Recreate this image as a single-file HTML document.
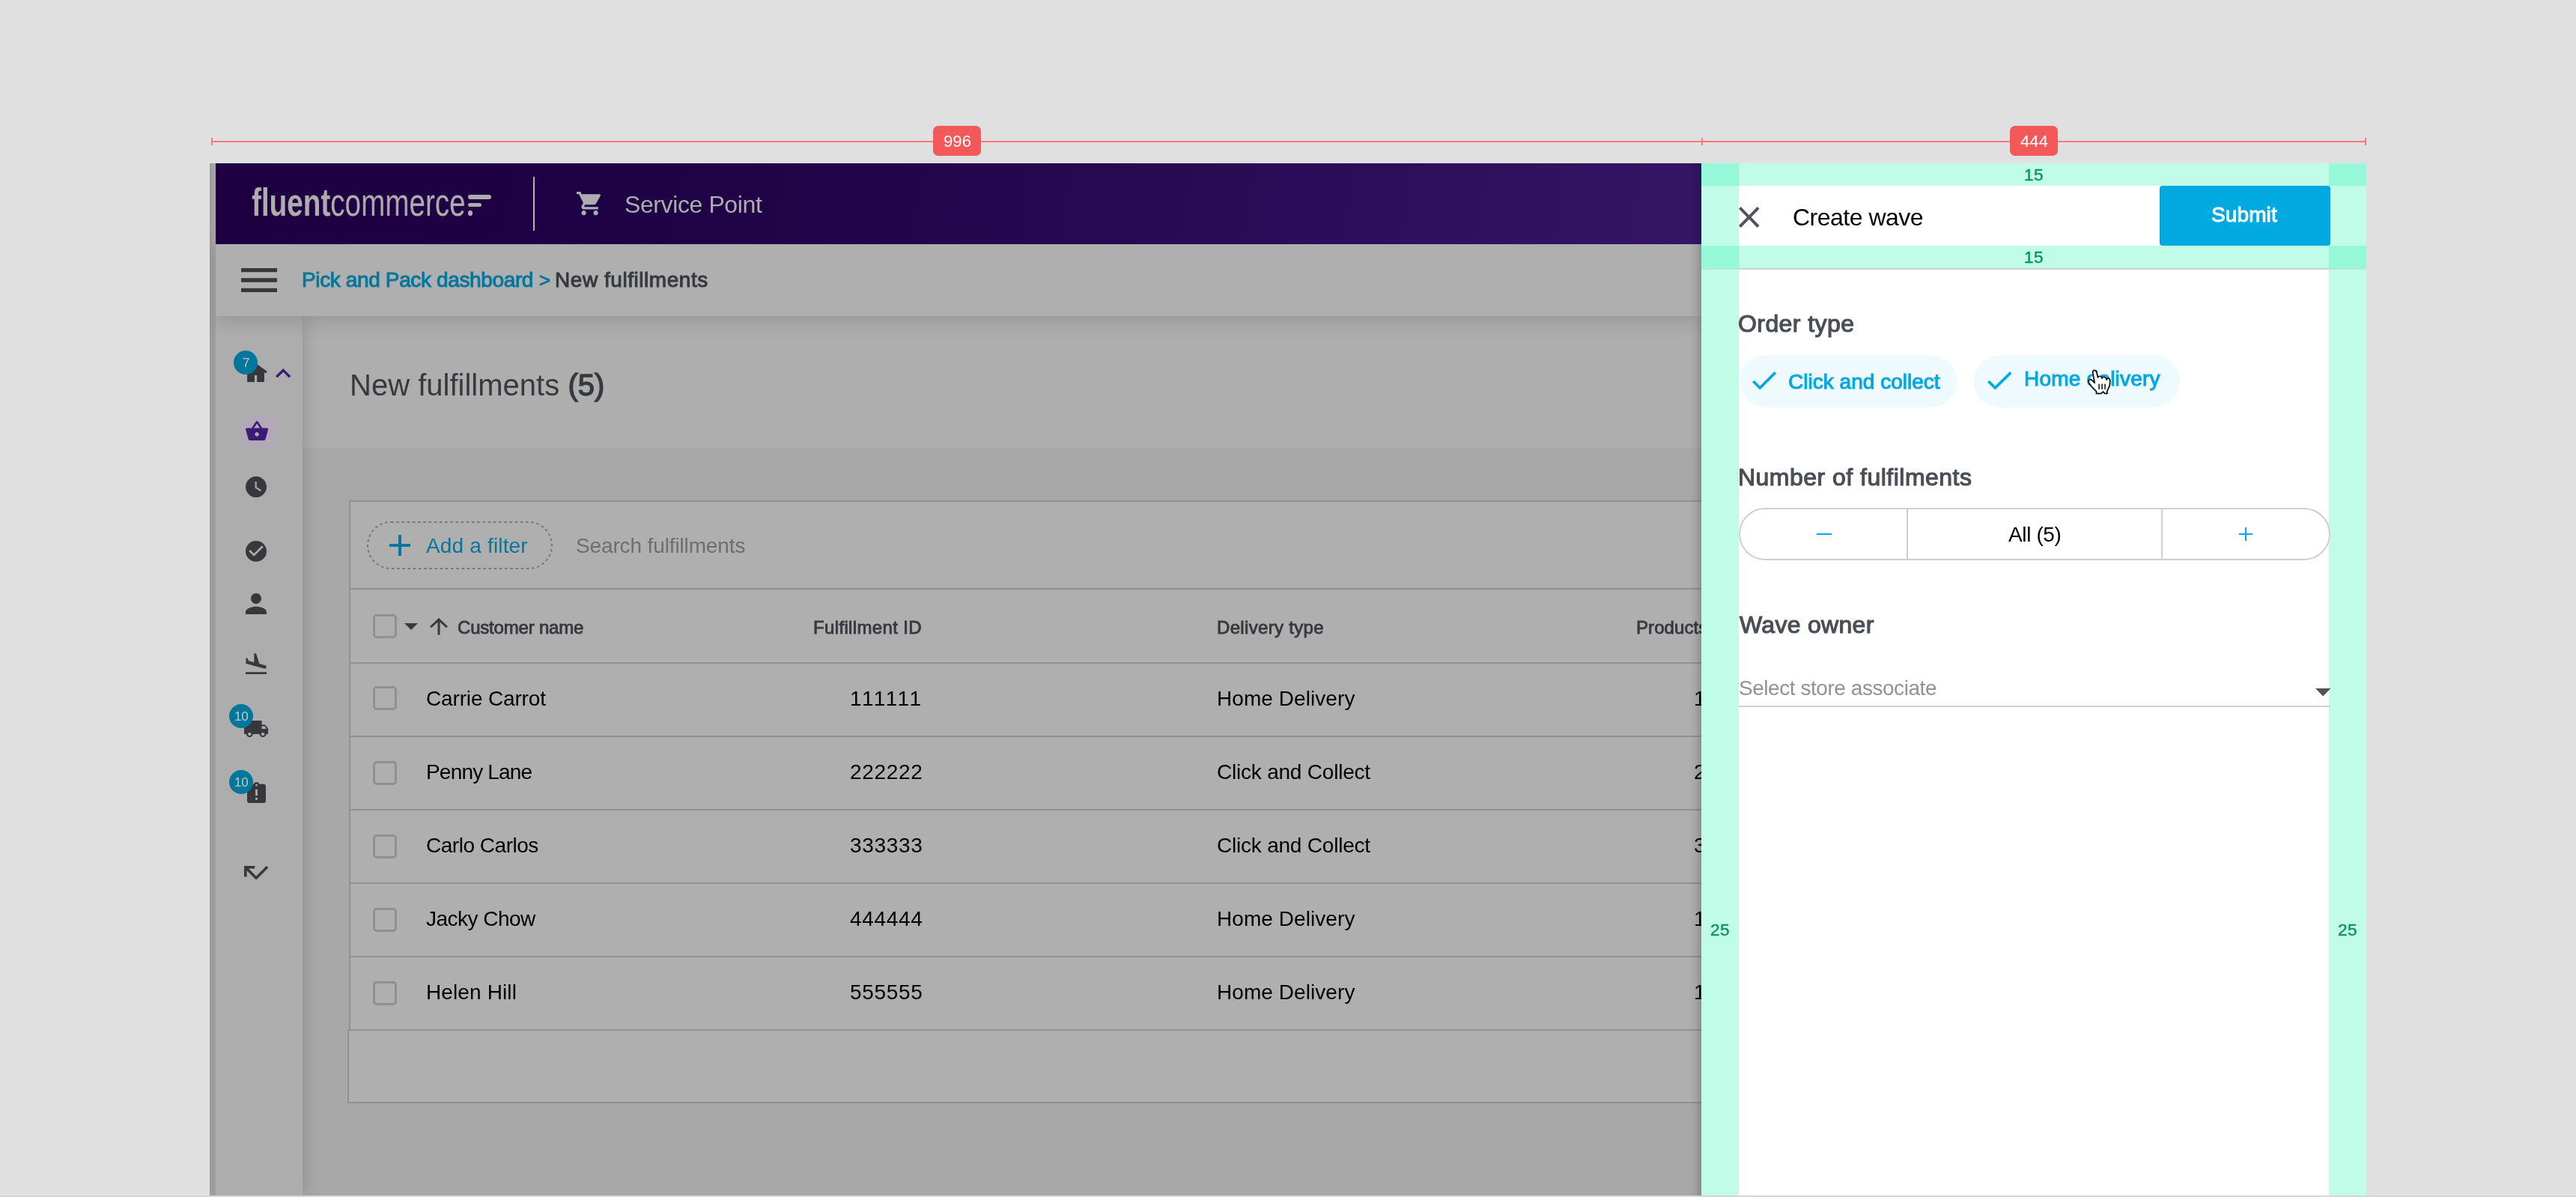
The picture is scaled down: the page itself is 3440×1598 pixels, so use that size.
<!DOCTYPE html>
<html lang="en"><head><meta charset="utf-8"><title>Create wave</title><style>
html,body{margin:0;padding:0}
body{width:3440px;height:1598px;overflow:hidden;background:#e0e0e0;position:relative;font-family:"Liberation Sans",sans-serif;}
.a{position:absolute;display:block}
.t{white-space:nowrap;line-height:1;will-change:transform}
</style></head><body>
<div class="a" style="left:0px;top:1596px;width:3440px;height:2px;background:#d4d6d9"></div>
<main class="a" style="left:0;top:0;width:2272px;height:1596px;overflow:hidden;clip-path:inset(218px 0 0 280px)">
<div class="a" style="left:280px;top:218px;width:8px;height:1378px;background:linear-gradient(90deg,#9d9d9d,#a7a7a7)"></div>
<div class="a" style="left:404px;top:422px;width:1868px;height:1174px;background:#a8a8a8"></div>
<div class="a" style="left:404px;top:422px;width:1868px;height:176px;background:#aeaeae"></div>
<div id="t1" class="a t" style="left:466.8px;top:494.44px;font-size:40px;font-weight:400;color:#36393e;letter-spacing:0.010px;">New fulfillments <span style="-webkit-text-stroke:1.400px #36393e">(5)</span></div>
<section aria-label="New fulfillments table">
<div class="a" style="left:466px;top:668px;width:2034px;height:708px;background:#afafaf;border:2px solid #8f9193;box-sizing:border-box"></div>
<div class="a" style="left:468px;top:785px;width:2032px;height:2px;background:#8f9193"></div>
<div class="a" style="left:468px;top:884px;width:2032px;height:2px;background:#8f9193"></div>
<div class="a" style="left:468px;top:982px;width:2032px;height:2px;background:#8f9193"></div>
<div class="a" style="left:468px;top:1080px;width:2032px;height:2px;background:#8f9193"></div>
<div class="a" style="left:468px;top:1178px;width:2032px;height:2px;background:#8f9193"></div>
<div class="a" style="left:468px;top:1276px;width:2032px;height:2px;background:#8f9193"></div>
<div class="a" style="left:464px;top:1374px;width:2036px;height:99px;background:#afafaf;border:2px solid #8f9193;box-sizing:border-box"></div>
<svg class="a" style="left:488px;top:694px;width:252px;height:68px" viewBox="488 694 252 68"><rect x="491" y="697" width="246" height="62" rx="31" fill="none" stroke="#77797c" stroke-width="2" stroke-dasharray="3.600 3.600"/></svg>
<div class="a" style="left:519.5px;top:726px;width:28.5px;height:4px;background:#05779c"></div>
<div class="a" style="left:531.75px;top:714px;width:4px;height:28px;background:#05779c"></div>
<div id="t2" class="a t" style="left:568.7px;top:714.90px;font-size:28px;font-weight:400;color:#05779c;letter-spacing:0.165px;">Add a filter</div>
<div id="t3" class="a t" style="left:768.5px;top:714.90px;font-size:28px;font-weight:400;color:#6c6e70;letter-spacing:-0.131px;">Search fulfillments</div>
<div class="a" style="left:498.3px;top:820.2px;width:31.4px;height:31.5px;border:3.800px solid #8e9093;border-radius:5px;box-sizing:border-box"></div>
<svg class="a" viewBox="7 10 10 5" preserveAspectRatio="none" style="left:540px;top:832px;width:18px;height:9px;"><path fill="#36393e" d="M7 10l5 5 5-5z"/></svg>
<svg class="a" viewBox="4 4 16 16" preserveAspectRatio="none" style="left:574px;top:825px;width:24px;height:22.5px;"><path fill="#36393e" d="M4 12l1.410 1.410L11 7.830V20h2V7.830l5.580 5.590L20 12l-8-8-8 8z"/></svg>
<div id="t4" class="a t" style="left:610.5px;top:826.08px;font-size:24px;font-weight:400;color:#36393e;letter-spacing:-0.192px;-webkit-text-stroke:0.86px #36393e;">Customer name</div>
<div id="t5" class="a t" style="left:1085.51px;top:826.08px;font-size:24px;font-weight:400;color:#36393e;letter-spacing:0.354px;-webkit-text-stroke:0.86px #36393e;">Fulfillment ID</div>
<div id="t6" class="a t" style="left:1624.8px;top:826.08px;font-size:24px;font-weight:400;color:#36393e;letter-spacing:0.325px;-webkit-text-stroke:0.86px #36393e;">Delivery type</div>
<div id="t7" class="a t" style="left:2184.7px;top:826.08px;font-size:24px;font-weight:400;color:#36393e;letter-spacing:0.067px;-webkit-text-stroke:0.86px #36393e;">Products</div>
<div class="a" style="left:498.3px;top:916.1px;width:31.4px;height:31.5px;border:3.800px solid #8e9093;border-radius:5px;box-sizing:border-box"></div>
<div id="t8" class="a t" style="left:568.7px;top:918.60px;font-size:28px;font-weight:400;color:#000;letter-spacing:-0.157px;">Carrie Carrot</div>
<div id="t9" class="a t" style="left:1134.56px;top:918.60px;font-size:28px;font-weight:400;color:#000;letter-spacing:2.399px;">111111</div>
<div id="t10" class="a t" style="left:1624.8px;top:918.60px;font-size:28px;font-weight:400;color:#000;letter-spacing:0.067px;">Home Delivery</div>
<div id="t11" class="a t" style="left:2261.76px;top:918.60px;font-size:28px;font-weight:400;color:#000;letter-spacing:0.663px;">1</div>
<div class="a" style="left:498.3px;top:1016px;width:31.4px;height:31.5px;border:3.800px solid #8e9093;border-radius:5px;box-sizing:border-box"></div>
<div id="t12" class="a t" style="left:568.7px;top:1016.60px;font-size:28px;font-weight:400;color:#000;letter-spacing:-0.810px;">Penny Lane</div>
<div id="t13" class="a t" style="left:1134.56px;top:1016.60px;font-size:28px;font-weight:400;color:#000;letter-spacing:0.668px;">222222</div>
<div id="t14" class="a t" style="left:1624.8px;top:1016.60px;font-size:28px;font-weight:400;color:#000;letter-spacing:-0.214px;">Click and Collect</div>
<div id="t15" class="a t" style="left:2261.76px;top:1016.60px;font-size:28px;font-weight:400;color:#000;letter-spacing:0.663px;">2</div>
<div class="a" style="left:498.3px;top:1114.2px;width:31.4px;height:31.5px;border:3.800px solid #8e9093;border-radius:5px;box-sizing:border-box"></div>
<div id="t16" class="a t" style="left:568.7px;top:1114.60px;font-size:28px;font-weight:400;color:#000;letter-spacing:-0.477px;">Carlo Carlos</div>
<div id="t17" class="a t" style="left:1134.56px;top:1114.60px;font-size:28px;font-weight:400;color:#000;letter-spacing:0.668px;">333333</div>
<div id="t18" class="a t" style="left:1624.8px;top:1114.60px;font-size:28px;font-weight:400;color:#000;letter-spacing:-0.214px;">Click and Collect</div>
<div id="t19" class="a t" style="left:2261.76px;top:1114.60px;font-size:28px;font-weight:400;color:#000;letter-spacing:0.663px;">3</div>
<div class="a" style="left:498.3px;top:1212.2px;width:31.4px;height:31.5px;border:3.800px solid #8e9093;border-radius:5px;box-sizing:border-box"></div>
<div id="t20" class="a t" style="left:568.7px;top:1212.60px;font-size:28px;font-weight:400;color:#000;letter-spacing:-0.525px;">Jacky Chow</div>
<div id="t21" class="a t" style="left:1134.56px;top:1212.60px;font-size:28px;font-weight:400;color:#000;letter-spacing:0.668px;">444444</div>
<div id="t22" class="a t" style="left:1624.8px;top:1212.60px;font-size:28px;font-weight:400;color:#000;letter-spacing:0.067px;">Home Delivery</div>
<div id="t23" class="a t" style="left:2261.76px;top:1212.60px;font-size:28px;font-weight:400;color:#000;letter-spacing:0.663px;">1</div>
<div class="a" style="left:498.3px;top:1310.1px;width:31.4px;height:31.5px;border:3.800px solid #8e9093;border-radius:5px;box-sizing:border-box"></div>
<div id="t24" class="a t" style="left:568.7px;top:1310.60px;font-size:28px;font-weight:400;color:#000;letter-spacing:0.119px;">Helen Hill</div>
<div id="t25" class="a t" style="left:1134.56px;top:1310.60px;font-size:28px;font-weight:400;color:#000;letter-spacing:0.668px;">555555</div>
<div id="t26" class="a t" style="left:1624.8px;top:1310.60px;font-size:28px;font-weight:400;color:#000;letter-spacing:0.067px;">Home Delivery</div>
<div id="t27" class="a t" style="left:2261.76px;top:1310.60px;font-size:28px;font-weight:400;color:#000;letter-spacing:0.663px;">1</div>
</section>
<nav aria-label="Sidebar">
<div class="a" style="left:288px;top:422px;width:116px;height:1174px;background:#adadad;box-shadow:3px 0 22px rgba(0,0,0,.14)"></div>
<svg class="a" style="left:320px;top:480px;width:40px;height:32px" viewBox="320 480 40 32"><path fill="#36383c" d="M330.100 510V496.900L328 498.400 326.200 495.900 341.500 484.800 356.800 495.900 355 498.400 352.900 496.900V510H343.200V501H340V510z"/></svg>
<div class="a" style="left:312px;top:468px;width:32px;height:32px;background:#02779c;border-radius:50%"></div>
<div id="t28" class="a t" style="left:324.05px;top:475.61px;font-size:17px;font-weight:400;color:#c4c8ca;letter-spacing:0.031px;">7</div>
<svg class="a" viewBox="6 8 12 7.41" preserveAspectRatio="none" style="left:367.8px;top:492px;width:20.4px;height:12.4px;"><path fill="#3b1a78" d="M12 8l-6 6 1.410 1.410L12 10.830l4.590 4.580L18 14z"/></svg>
<div class="a" style="left:318px;top:550px;width:52px;height:52px;background:#b1a9b6;border-radius:50%"></div>
<svg class="a" viewBox="1 2.02 22 18.98" preserveAspectRatio="none" style="left:328px;top:562px;width:30.2px;height:26px;"><path fill="#3b1a78" d="M17.21 9l-4.38-6.56c-.19-.28-.51-.42-.83-.42-.32 0-.64.14-.83.43L6.79 9H2c-.55 0-1 .45-1 1 0 .09.01.18.04.27l2.54 9.27c.23.84 1 1.46 1.92 1.46h13c.92 0 1.69-.62 1.93-1.46l2.54-9.27L23 10c0-.55-.45-1-1-1h-4.79zM9 9l3-4.4L15 9H9zm3 8c-1.1 0-2-.9-2-2s.9-2 2-2 2 .9 2 2-.9 2-2 2z"/></svg>
<svg class="a" viewBox="2 2 20 20" preserveAspectRatio="none" style="left:328px;top:635.8px;width:28px;height:28.1px;"><path fill="#36383c" d="M12 2C6.5 2 2 6.5 2 12s4.5 10 10 10 10-4.5 10-10S17.5 2 12 2zm4.2 14.2L11 13V7h1.5v5.2l4.5 2.700-.8 1.300z"/></svg>
<svg class="a" viewBox="2 2 20 20" preserveAspectRatio="none" style="left:328px;top:722px;width:28px;height:27.8px;"><path fill="#36383c" d="M12 2C6.48 2 2 6.48 2 12s4.48 10 10 10 10-4.48 10-10S17.52 2 12 2zm-2 15l-5-5 1.41-1.41L10 14.17l7.59-7.59L19 8l-9 9z"/></svg>
<svg class="a" viewBox="4 4 16 16" preserveAspectRatio="none" style="left:328px;top:791.7px;width:28px;height:28.3px;"><path fill="#36383c" d="M12 12c2.21 0 4-1.79 4-4s-1.79-4-4-4-4 1.79-4 4 1.79 4 4 4zm0 2c-2.67 0-8 1.34-8 4v2h16v-2c0-2.660-5.330-4-8-4z"/></svg>
<svg class="a" viewBox="2.5 2 19 19" preserveAspectRatio="none" style="left:328px;top:871.9px;width:28.2px;height:28.1px;"><path fill="#36383c" d="M2.5 19h19v2h-19zm7.18-5.730l4.350 1.160 5.310 1.420c.8.210 1.620-.260 1.840-1.060.210-.8-.260-1.620-1.060-1.840l-5.310-1.420-2.760-9.020L10.120 2v8.280L5.150 8.950l-.930-2.320-1.450-.390v5.170l1.600.430 5.310 1.430z"/></svg>
<svg class="a" viewBox="1 4 22 16" preserveAspectRatio="none" style="left:325.8px;top:961.9px;width:32.4px;height:22.1px;"><path fill="#36383c" d="M20 8h-3V4H3c-1.100 0-2 .9-2 2v11h2c0 1.660 1.340 3 3 3s3-1.340 3-3h6c0 1.660 1.340 3 3 3s3-1.340 3-3h2v-5l-3-4zM6 18.500c-.830 0-1.500-.670-1.500-1.500s.670-1.500 1.500-1.500 1.500.670 1.500 1.500-.670 1.500-1.500 1.500zm13.500-9l1.960 2.500H17V9.500h2.500zm-1.500 9c-.830 0-1.500-.670-1.500-1.500s.670-1.500 1.500-1.500 1.500.670 1.500 1.500-.670 1.500-1.500 1.500z"/></svg>
<div class="a" style="left:306px;top:940px;width:32px;height:32px;background:#02779c;border-radius:50%"></div>
<div id="t29" class="a t" style="left:312.75px;top:947.61px;font-size:17px;font-weight:400;color:#c4c8ca;letter-spacing:-0.211px;">10</div>
<svg class="a" viewBox="3 1 18 20" preserveAspectRatio="none" style="left:330px;top:1044px;width:25px;height:28px;"><path fill="#36383c" d="M19 3h-4.180C14.400 1.840 13.300 1 12 1c-1.300 0-2.400.840-2.820 2H5c-1.100 0-2 .9-2 2v14c0 1.100.9 2 2 2h14c1.100 0 2-.9 2-2V5c0-1.100-.9-2-2-2zm-6 15h-2v-2h2v2zm0-4h-2V8h2v6zm-1-9c-.550 0-1-.450-1-1s.450-1 1-1 1 .450 1 1-.450 1-1 1z"/></svg>
<div class="a" style="left:306px;top:1028px;width:32px;height:32px;background:#02779c;border-radius:50%"></div>
<div id="t30" class="a t" style="left:312.75px;top:1035.61px;font-size:17px;font-weight:400;color:#c4c8ca;letter-spacing:-0.211px;">10</div>
<svg class="a" viewBox="3 7 18 10.41" preserveAspectRatio="none" style="left:325.8px;top:1155.6px;width:32.2px;height:18.8px;"><path fill="#36383c" d="M19.59 7L12 14.590 6.410 9H11V7H3v8h2v-4.590l7 7 9-9z"/></svg>
</nav>
<nav aria-label="Breadcrumb">
<div class="a" style="left:288px;top:326px;width:1984px;height:96px;background:#afafaf;box-shadow:0 4px 26px rgba(0,0,0,.17)"></div>
<svg class="a" viewBox="3 6 18 12" preserveAspectRatio="none" style="left:322px;top:358px;width:48px;height:32px;"><path fill="#36383c" d="M3 18h18v-2H3v2zm0-5h18v-2H3v2zm0-7v2h18V6H3z"/></svg>
<div id="t31" class="a t" style="left:403px;top:359.80px;font-size:28px;font-weight:400;color:#05779c;letter-spacing:-0.368px;-webkit-text-stroke:1.01px #05779c;">Pick and Pack dashboard</div>
<div id="t32" class="a t" style="left:720px;top:361.49px;font-size:26px;font-weight:400;color:#05779c;letter-spacing:-2.188px;-webkit-text-stroke:0.94px #05779c;">></div>
<div id="t33" class="a t" style="left:741px;top:359.80px;font-size:28px;font-weight:400;color:#36393e;letter-spacing:0.548px;-webkit-text-stroke:1.01px #36393e;">New fulfillments</div>
</nav>
<header>
<div class="a" style="left:288px;top:218px;width:1984px;height:108px;background:linear-gradient(100deg,#1e0042 0%,#1f0145 30%,#2b0d59 75%,#341665 100%)"></div>
<div class="a t" style="left:336px;top:243.7px;font-size:52px;color:#adadad;transform-origin:0 0;transform:scaleX(.7435);letter-spacing:0"><b>fluent</b>commerce</div>
<div class="a" style="left:624.7px;top:260px;width:31.3px;height:5.7px;background:#adadad;border-radius:3px"></div>
<div class="a" style="left:624.7px;top:271px;width:18.8px;height:5.4px;background:#adadad;border-radius:3px"></div>
<div class="a" style="left:624.7px;top:280.7px;width:6.8px;height:7px;background:#adadad;border-radius:50%"></div>
<div class="a" style="left:711.8px;top:236px;width:2.1px;height:72px;background:#b2b2b2"></div>
<svg class="a" viewBox="1 2 20 20" preserveAspectRatio="none" style="left:770px;top:256.4px;width:32px;height:31.3px;"><path fill="#adadad" d="M7 18c-1.100 0-1.990.9-1.990 2S5.900 22 7 22s2-.9 2-2-.9-2-2-2zM1 2v2h2l3.600 7.590-1.350 2.450c-.160.280-.250.610-.250.960 0 1.100.9 2 2 2h12v-2H7.420c-.140 0-.250-.110-.250-.250l.030-.120.900-1.630h7.450c.750 0 1.410-.410 1.750-1.030l3.580-6.490c.080-.140.120-.310.120-.480 0-.550-.450-1-1-1H5.210l-.940-2H1zm16 16c-1.100 0-1.990.9-1.990 2s.890 2 1.990 2 2-.9 2-2-.9-2-2-2z"/></svg>
<div id="t34" class="a t" style="left:834.4px;top:256.91px;font-size:32px;font-weight:400;color:#adadad;letter-spacing:-0.397px;">Service Point</div>
</header>
</main>
<aside aria-label="Create wave">
<div class="a" style="left:2256px;top:218px;width:16px;height:1378px;background:linear-gradient(90deg,rgba(0,0,0,0) 0%,rgba(0,0,0,.05) 50%,rgba(0,0,0,.18) 100%)"></div>
<div class="a" style="left:2272px;top:218px;width:888px;height:1378px;background:#fff"></div>
<div class="a" style="left:2272px;top:218px;width:888px;height:30px;background:#c1fce8"></div>
<div class="a" style="left:2272px;top:328px;width:888px;height:30px;background:#c1fce8"></div>
<div class="a" style="left:2272px;top:358px;width:888px;height:2px;background:#cfd1d3"></div>
<div class="a" style="left:2272px;top:218px;width:50px;height:1378px;background:#c1fce8"></div>
<div class="a" style="left:3110px;top:218px;width:50px;height:1378px;background:#c1fce8"></div>
<div class="a" style="left:2272px;top:218px;width:50px;height:30px;background:#94f8d9"></div>
<div class="a" style="left:2272px;top:328px;width:50px;height:30px;background:#94f8d9"></div>
<div class="a" style="left:2272px;top:358px;width:50px;height:2px;background:#b4e9d6"></div>
<div class="a" style="left:3110px;top:218px;width:50px;height:30px;background:#94f8d9"></div>
<div class="a" style="left:3110px;top:328px;width:50px;height:30px;background:#94f8d9"></div>
<div class="a" style="left:3110px;top:358px;width:50px;height:2px;background:#b4e9d6"></div>
<div id="t35" class="a t" style="left:2703px;top:222.95px;font-size:22.5px;font-weight:400;color:#0d9160;letter-spacing:0.484px;-webkit-text-stroke:.45px #0d9160">15</div>
<div id="t36" class="a t" style="left:2703px;top:332.65px;font-size:22.5px;font-weight:400;color:#0d9160;letter-spacing:0.484px;-webkit-text-stroke:.45px #0d9160">15</div>
<div id="t37" class="a t" style="left:2284px;top:1230.65px;font-size:22.5px;font-weight:400;color:#0d9160;letter-spacing:0.484px;-webkit-text-stroke:.45px #0d9160">25</div>
<div id="t38" class="a t" style="left:3122px;top:1230.65px;font-size:22.5px;font-weight:400;color:#0d9160;letter-spacing:0.484px;-webkit-text-stroke:.45px #0d9160">25</div>
<svg class="a" viewBox="5 5 14 14" preserveAspectRatio="none" style="left:2322.3px;top:276px;width:27.5px;height:27.9px;"><path fill="#50545a" d="M19 6.410L17.590 5 12 10.590 6.410 5 5 6.410 10.590 12 5 17.590 6.410 19 12 13.410 17.590 19 19 17.590 13.410 12z"/></svg>
<div id="t39" class="a t" style="left:2393.8px;top:273.91px;font-size:32px;font-weight:400;color:#000;letter-spacing:-0.498px;">Create wave</div>
<div class="a" style="left:2884px;top:248px;width:228px;height:80px;background:#00a9e0;border-radius:4px"></div>
<div id="t40" class="a t" style="left:2952.5px;top:273.00px;font-size:28px;font-weight:400;color:#fff;letter-spacing:0.102px;-webkit-text-stroke:1.01px #fff;">Submit</div>
<div id="t41" class="a t" style="left:2320.5px;top:416.31px;font-size:32px;font-weight:400;color:#4a4f56;letter-spacing:0.425px;-webkit-text-stroke:1.15px #4a4f56;">Order type</div>
<div class="a" style="left:2323px;top:474px;width:290px;height:70px;background:#effafe;border-radius:35px"></div>
<svg class="a" viewBox="3.41 5.59 17.59 13.41" preserveAspectRatio="none" style="left:2339.6px;top:495.8px;width:32.2px;height:24.4px;"><path fill="#00a9e0" d="M9 16.170L4.830 12l-1.420 1.410L9 19 21 7l-1.410-1.410z"/></svg>
<div id="t42" class="a t" style="left:2388px;top:496.10px;font-size:28px;font-weight:400;color:#00a9e0;letter-spacing:0.021px;-webkit-text-stroke:1.01px #00a9e0;">Click and collect</div>
<div class="a" style="left:2636px;top:474px;width:275px;height:70px;background:#effafe;border-radius:35px"></div>
<svg class="a" viewBox="3.41 5.59 17.59 13.41" preserveAspectRatio="none" style="left:2653.6px;top:495.8px;width:32.6px;height:24.4px;"><path fill="#00a9e0" d="M9 16.170L4.830 12l-1.420 1.410L9 19 21 7l-1.410-1.410z"/></svg>
<div id="t43" class="a t" style="left:2703px;top:492.10px;font-size:28px;font-weight:400;color:#00a9e0;letter-spacing:0.222px;-webkit-text-stroke:1.01px #00a9e0;">Home delivery</div>
<div id="t44" class="a t" style="left:2321px;top:620.91px;font-size:32px;font-weight:400;color:#4a4f56;letter-spacing:0.481px;-webkit-text-stroke:1.15px #4a4f56;">Number of fulfilments</div>
<div class="a" style="left:2322px;top:678px;width:790px;height:70px;border:2px solid #cdd0d3;border-radius:35px;box-sizing:border-box"></div>
<div class="a" style="left:2546px;top:680px;width:2px;height:66px;background:#cdd0d3"></div>
<div class="a" style="left:2886px;top:680px;width:2px;height:66px;background:#cdd0d3"></div>
<div class="a" style="left:2426px;top:712px;width:20px;height:2px;background:#00a9e0"></div>
<div class="a" style="left:2989.6px;top:712px;width:18.8px;height:2px;background:#00a9e0"></div>
<div class="a" style="left:2998px;top:703.6px;width:2px;height:18.8px;background:#00a9e0"></div>
<div id="t45" class="a t" style="left:2682px;top:700.30px;font-size:28px;font-weight:400;color:#000;letter-spacing:-0.378px;">All (5)</div>
<div id="t46" class="a t" style="left:2323px;top:818.41px;font-size:32px;font-weight:400;color:#4a4f56;letter-spacing:0.297px;-webkit-text-stroke:1.15px #4a4f56;">Wave owner</div>
<div id="t47" class="a t" style="left:2321.5px;top:905.10px;font-size:28px;font-weight:400;color:#929292;letter-spacing:-0.450px;">Select store associate</div>
<svg class="a" viewBox="7 10 10 5" preserveAspectRatio="none" style="left:3091.6px;top:919.4px;width:20.4px;height:10.6px;"><path fill="#50545a" d="M7 10l5 5 5-5z"/></svg>
<div class="a" style="left:2322px;top:942px;width:790px;height:2px;background:#cdd0d3"></div>
<svg class="a" style="left:2760px;top:480px;width:90px;height:60px" viewBox="0 0 1796 1197"><path d="M692 345C680 300 722 275 762 292C792 306 800 340 806 380L830 478C842 436 902 430 930 474L936 500C952 448 1032 450 1050 502L1060 540C1080 488 1142 490 1150 542L1150 640C1150 722 1100 780 1076 832L1076 905L1016 905L966 855L916 905L786 905L790 850C740 800 690 760 660 720L590 622C560 582 580 540 620 530C660 524 700 570 742 622Z" fill="#fff" stroke="#0a0a0a" stroke-width="34" stroke-linejoin="round"/><path d="M860 650V792M940 650V792M1020 650V792" stroke="#0a0a0a" stroke-width="30" fill="none"/></svg>
</aside>
<div aria-label="Measurements">
<div class="a" style="left:282px;top:188px;width:1990px;height:2px;background:#ff7878"></div>
<div class="a" style="left:2272px;top:188px;width:888px;height:2px;background:#ff7878"></div>
<div class="a" style="left:282px;top:184px;width:2px;height:10px;background:#ff7878"></div>
<div class="a" style="left:2272px;top:184px;width:2px;height:10px;background:#ff7878"></div>
<div class="a" style="left:3158px;top:184px;width:2px;height:10px;background:#ff7878"></div>
<div class="a" style="left:1246px;top:168px;width:64px;height:40px;background:#f4595a;border-radius:7px"></div>
<div id="t48" class="a t" style="left:1259.5px;top:177.58px;font-size:22px;font-weight:400;color:#fff;letter-spacing:0.094px;">996</div>
<div class="a" style="left:2684px;top:168px;width:64px;height:40px;background:#f4595a;border-radius:7px"></div>
<div id="t49" class="a t" style="left:2697.5px;top:177.58px;font-size:22px;font-weight:400;color:#fff;letter-spacing:0.094px;">444</div>
</div>
</body></html>
